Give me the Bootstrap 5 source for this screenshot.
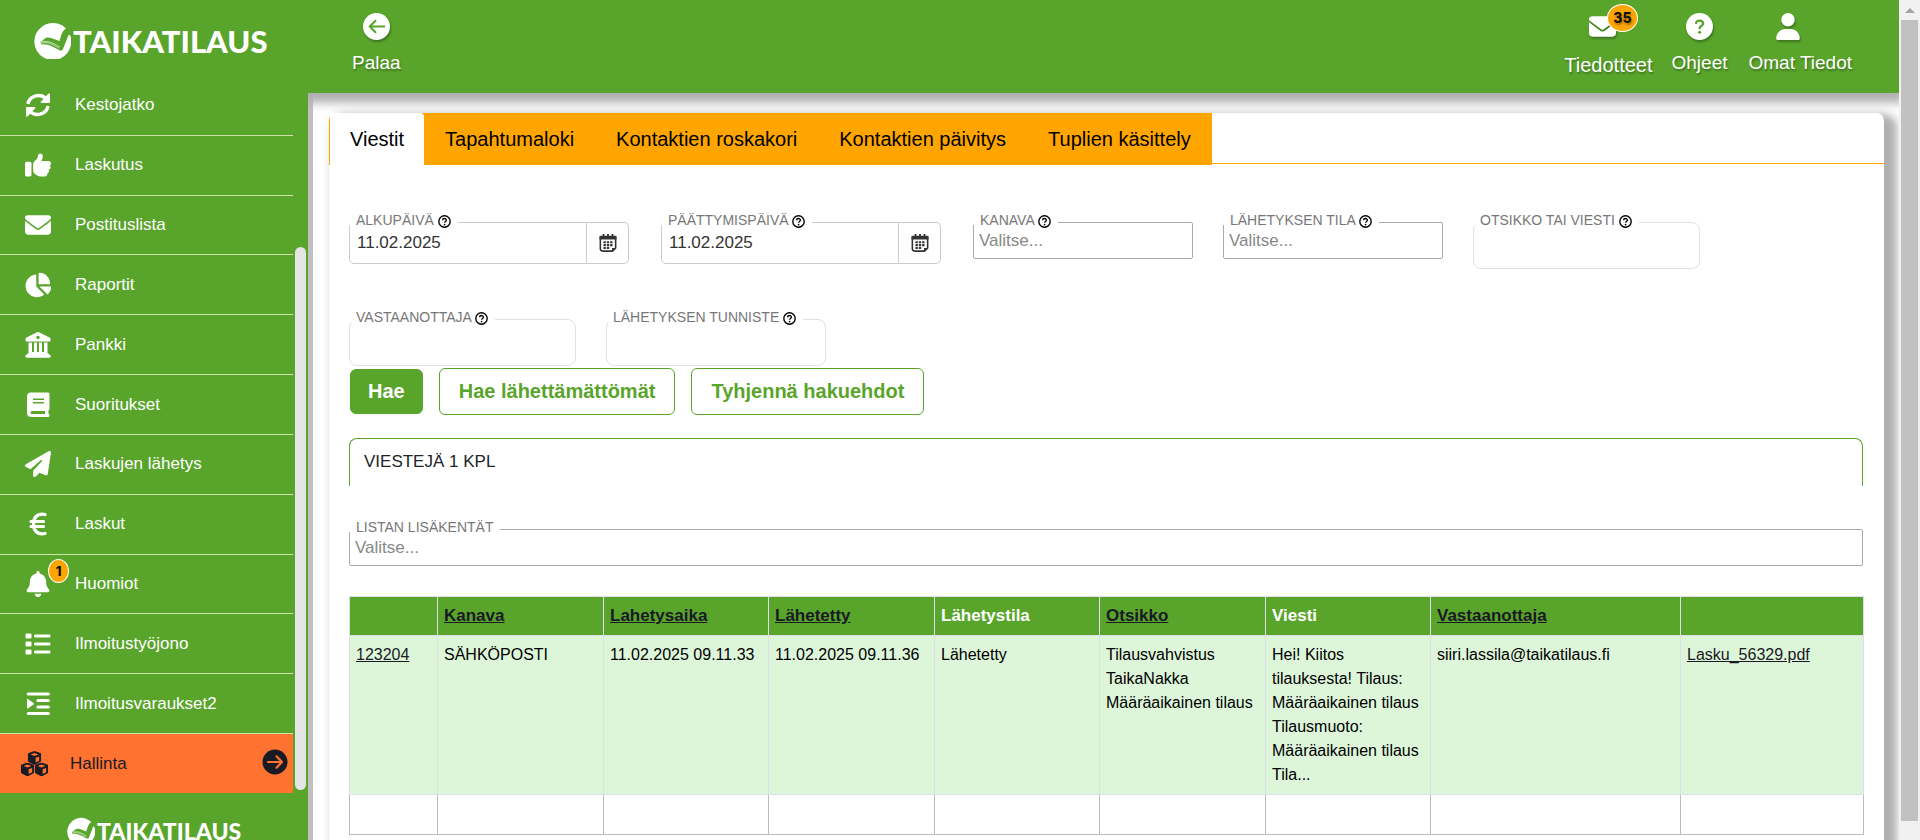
<!DOCTYPE html>
<html lang="fi">
<head>
<meta charset="utf-8">
<meta name="viewport" content="width=device-width, initial-scale=1">
<title>Taikatilaus – Viestit</title>
<link href="https://cdn.jsdelivr.net/npm/bootstrap@5.3.0/dist/css/bootstrap.min.css" rel="stylesheet">
<style>
  :root { --tt-green: #59a52c; --tt-orange: #ffa500; --tt-ink: #1a1a24; }
  body { font-family: "Liberation Sans", Arial, sans-serif; font-size: 17px; line-height: 24px; color: #212529; background: #fff; }
  a { color: inherit; }

  /* sidebar */
  .side { width: 308px; background: var(--tt-green); color: #fff; z-index: 3; }
  .side-top { height: 76px; padding: 22px 0 0 34px; }
  .side-foot { height: 47px; padding: 24px 0 0 67px; overflow: hidden; }
  .brand { font-family: Lato, "Liberation Sans", sans-serif; font-weight: 900; color: #fff; gap: 2px; }
  .brand-lg { font-size: 31px; line-height: 36px; }
  .brand-lg svg { width: 37px; height: 37px; }
  .brand-sm { font-size: 23px; line-height: 28px; }
  .brand-sm svg { width: 28px; height: 28px; }
  .side-list { width: 293px; }
  .side-item { flex: 1 1 0; border-bottom: 1px solid #cfe5a8; }
  .side-item:last-child { border-bottom: 0; }
  .side-link { padding-left: 25px; gap: 24px; }
  .side-link .ico { width: 26px; height: 26px; }
  .side-link.current { background: #ff7230; color: var(--tt-ink); padding: 0 5px 0 20px; gap: 21px; }
  .side-link.current .ico-wide { width: 29px; }
  .side-thumb { left: 295px; top: 247px; bottom: 50px; width: 11px; border-radius: 6px; background: #e5e5e5; }
  .count { background: var(--tt-orange); color: #111; border: 1px solid #fff; border-radius: 50%; font-family: Inter, sans-serif; font-weight: 800; text-align: center; }
  .count-sm { left: 23px; top: -12px; width: 21px; height: 24px; font-size: 13px; line-height: 22px; }
  .count-lg { left: 18px; top: -9px; width: 31px; height: 28px; font-size: 14px; line-height: 26px; }

  /* top bar */
  .topbar { height: 93px; background: var(--tt-green); color: #fff; padding: 13px 47px 0 44px; box-shadow: 0 5px 9px 5px #b0b0b0; z-index: 2; }
  .top-link { font-size: 19px; gap: 11px; text-shadow: 1px 2px 2px rgba(0,0,0,.3); }
  .top-link svg { height: 27px; filter: drop-shadow(1px 2px 1px rgba(0,0,0,.3)); }
  .top-link.news { font-size: 20px; gap: 13px; margin-right: 19px; }
  .top-link.guide { margin-right: 21px; }

  /* content */
  .stage { border-left: 5px solid #c0c0c0; padding: 20px 15px 0 16px; }
  .panel { border-radius: 8px 8px 0 0; background: #fff; box-shadow: 8px 6px 8px 5px #b0b0b0; }
  .tabs { height: 51px; border-bottom: 1px solid var(--tt-orange); }
  .tab-strip { height: 52px; background: var(--tt-orange); border-left: 1px solid var(--tt-orange); border-top-left-radius: 8px; }
  .tab { padding: 0 21px; font-size: 20px; line-height: 52px; color: #000; }
  .tab.on { background: #fff; border-radius: 4px 4px 0 0; padding: 0 20px; }
  .inner { padding: 58px 21px 0 20px; }

  .filters { gap: 50px 30px; }
  .field { position: relative; }
  .field > label { position: absolute; left: -1px; top: -13px; height: 16px; padding: 0 7px 0 8px; background: #fff; color: #777; font-size: 14px; line-height: 23px; text-transform: uppercase; white-space: nowrap; z-index: 4; }
  .field > label svg { width: 13px; height: 13px; position: relative; top: 0; overflow: visible; }
  .field .box { width: 100%; border: 1px solid #dee2e6; border-radius: 8px; background: #fff; padding: 0 8px; font-size: 17px; color: #333; }
  .box.h-text { height: 47px; }
  .box.h-date { height: 42px; }
  .field .box.h-pick { height: 37px; border: 1px solid #aaa; border-radius: 2px; padding: 0 0 0 5px; color: #888; appearance: none; }
  .field .box.h-date { border-color: #ccc; border-radius: 5px 0 0 5px; padding: 0 7px; }
  .f-date { width: 280px; margin-right: 2px; }
  .f-pick { width: 220px; }
  .f-text { width: 227px; }
  .cal { width: 42px; border: 1px solid #ccc; border-left: 0; border-radius: 0 5px 5px 0; background: #fff; flex: none; }
  .acts { gap: 16px; margin-top: 2px; }
  .act { font-size: 20px; font-weight: 700; line-height: 23px; padding: 11px 19px; border-radius: 6px; color: var(--tt-green); border: 1px solid var(--tt-green); background: #fff; }
  .act.main-act { background: var(--tt-green); color: #fff; padding: 10px 17px; margin: 1px 0 1px 1px; }
  .tally { margin-top: 23px; height: 48px; padding: 11px 14px; border: 1px solid var(--tt-green); border-bottom: 0; border-radius: 8px 8px 0 0; }
  .extra { margin-top: 43px; }

  .grid { margin-top: 30px; table-layout: fixed; width: 100%; border-collapse: collapse; color: #000; font-size: 16px; }
  .grid th, .grid td { border: 1px solid #dcdfe8; padding: 7px 6px; vertical-align: top; }
  .grid th { background: var(--tt-green); color: #fff; font-size: 17px; height: 38px; }
  .grid th a, .grid td a { color: var(--tt-ink); }
  .grid .hit td { background: #ddf6da; height: 159px; }
  .grid .blank td { height: 40px; border-color: #bbb; border-top-color: #dce6ef; }

  /* window scroll bar */
  .winbar { width: 21px; background: #f1f1f1; padding: 0 2px 19px 2px; z-index: 3; }
  .winbar svg { width: 17px; height: 20px; }
  .winbar div { background: #c1c1c1; }
</style>
</head>
<body>
<svg class="d-none" aria-hidden="true">
  <symbol id="logo" viewBox="0 0 37 37">
    <path fill="#fff" d="M32 6.500A18.500 18.500 0 1 0 36.500 14C35 11.500 34.500 12.500 33 17L29 27Q28 29.500 25 28C18 24 13 21.500 7 22.500L6.500 19.500C8 20 9 17 13 15.500C18 15 21 18 25.500 19C27 14 28 9 32 6.500Z"/>
    <path fill="none" stroke="#fff" stroke-width=".6" d="M7 20c7-2 12 1 19 5M7 21.200c7-2 12 1 18 5"/>
  </symbol>
  <symbol id="help" viewBox="0 0 16 16">
    <circle cx="8" cy="8" r="7" fill="none" stroke="#000" stroke-width="1.700"/>
    <path d="M5.700 6.600c0-3.100 4.700-2.900 4.600-.2 0 1.500-2.200 1.500-2.200 3.100" fill="none" stroke="#000" stroke-width="1.600"/><circle cx="8.100" cy="11.800" r="1.100"/>
  </symbol>
  <symbol id="calendar" viewBox="0 0 20 20">
    <path fill="none" stroke="#333" stroke-width="1.800" d="M1.500 4v12.500q0 2.500 2.500 2.500H15l3.500-3.500V4z"/><path fill="#333" d="M.600 3q0-1 1-1H4V0h2v2h3V0h2v2h3V0h2v2h2.400q1 0 1 1v3H.6zM5 8h2.600v2.400H5zM8.700 8h2.600v2.400H8.700zM12.400 8H15v2.400h-2.600zM5 11.200h2.600v2.300H5zM8.700 11.200h2.600v2.300H8.700zM12.400 11.200H15v2.300h-2.600zM5 14.400h2.600v2.300H5zM8.700 14.400h2.600v2.300H8.700zM14.500 19.500v-4h4.500z"/>
  </symbol>
  <symbol id="envelope" viewBox="0 0 512 512"><path d="M48 64C21.500 64 0 85.500 0 112c0 15.100 7.100 29.300 19.200 38.400L236.800 313.600c11.400 8.500 27 8.500 38.400 0L492.800 150.400c12.100-9.100 19.200-23.300 19.200-38.400c0-26.500-21.500-48-48-48H48zM0 176V384c0 35.300 28.700 64 64 64H448c35.300 0 64-28.700 64-64V176L294.400 339.200c-22.800 17.100-54 17.100-76.800 0L0 176z"/></symbol>
  <symbol id="cube" viewBox="0 0 16 16"><path fill-rule="evenodd" d="M7 .3Q8 0 9 .3l5.500 2q1 .4 1 1.500v7.400q0 1-1 1.500L9 15.500Q8 16 7 15.500L1.500 12.700q-1-.5-1-1.500V3.800q0-1.100 1-1.500zM8 2.300 3.500 4 8 5.800 12.500 4zM9.300 7.800v5.200l4-2V6.200z"/></symbol>
</svg>

<div class="d-flex vh-100 overflow-hidden">
  <aside class="side position-relative d-flex flex-column flex-shrink-0">
    <div class="side-top flex-shrink-0"><a href="#" class="brand brand-lg d-flex align-items-center text-decoration-none"><svg aria-hidden="true"><use href="#logo"/></svg><span>TAIKATILAUS</span></a></div>
    <ul class="side-list list-unstyled d-flex flex-column flex-fill mb-0">
      <li class="side-item d-flex"><a href="#" class="side-link d-flex align-items-center flex-fill text-decoration-none">
        <svg class="ico" viewBox="0 0 26 26" fill="none" stroke="#fff" stroke-width="3.400"><path d="M3 12A10.500 9.500 0 0 1 21 6.500M23 14A10.500 9.500 0 0 1 5 19.500"/><path fill="#fff" stroke="none" d="M23.500 1.500q1.500-.5 1.500 1V10q0 1-1 1h-7.500q-1.500-.3-.5-1.500zM2.500 24.500q-1.500.5-1.500-1V16q0-1 1-1h7.500q1.500.3.500 1.500z"/></svg>Kestojatko</a></li>
      <li class="side-item d-flex"><a href="#" class="side-link d-flex align-items-center flex-fill text-decoration-none">
        <svg class="ico" viewBox="0 0 512 512" fill="#fff"><path d="M313.400 32.900c26 5.200 42.900 30.500 37.700 56.500l-2.300 11.400c-5.300 26.700-15.100 52.100-28.800 75.200H464c26.500 0 48 21.500 48 48c0 18.500-10.500 34.600-25.900 42.600C497 275.400 504 288.900 504 304c0 23.400-16.800 42.900-38.900 47.100c4.400 7.300 6.900 15.800 6.900 24.900c0 21.300-13.900 39.400-33.100 45.600c.7 3.300 1.100 6.800 1.100 10.400c0 26.500-21.500 48-48 48H294.500c-19 0-37.500-5.600-53.300-16.100l-38.500-25.700C176 420.400 160 390.400 160 358.300V247.100c0-29.200 13.300-56.700 36-75l7.400-5.900c26.500-21.200 44.600-51 51.200-84.200l2.300-11.400c5.200-26 30.500-42.900 56.500-37.700zM32 192H96c17.700 0 32 14.300 32 32V448c0 17.700-14.300 32-32 32H32c-17.700 0-32-14.300-32-32V224c0-17.700 14.300-32 32-32z"/></svg>Laskutus</a></li>
      <li class="side-item d-flex"><a href="#" class="side-link d-flex align-items-center flex-fill text-decoration-none">
        <svg class="ico" fill="#fff"><use href="#envelope"/></svg>Postituslista</a></li>
      <li class="side-item d-flex"><a href="#" class="side-link d-flex align-items-center flex-fill text-decoration-none">
        <svg class="ico" viewBox="20 0 544 512" fill="#fff"><path d="M304 240V16.600c0-9 7-16.600 16-16.600C443.700 0 544 100.300 544 224c0 9-7.600 16-16.600 16H304zM32 272C32 150.700 122.100 50.300 239 34.300c9.200-1.300 17 6.100 17 15.400V288L412.500 444.500c6.700 6.700 6.200 17.700-1.500 23.100C371.800 495.600 323.800 512 272 512C139.500 512 32 404.600 32 272zm526.400 16c9.300 0 16.600 7.800 15.400 17c-7.700 55.900-34.600 105.600-73.900 142.300c-6 5.600-15.400 5.200-21.200-.7L320 288H558.400z"/></svg>Raportit</a></li>
      <li class="side-item d-flex"><a href="#" class="side-link d-flex align-items-center flex-fill text-decoration-none">
        <svg class="ico" viewBox="0 0 26 26" fill="#fff"><path fill-rule="evenodd" d="M12 .3q1-.4 2 0l10.500 5.200q1 .6 1 1.500v1.500q0 1-1 1h-23q-1 0-1-1V7q0-.9 1-1.500zM13 3.700a1.700 1.700 0 1 0 .01 0z"/><path d="M3.500 10.500H7V20h2v-9.500h3V20h2v-9.500h3V20h2v-9.500h3.500V21l2.500 2q.7.500.7 1.300 0 1.400-1.300 1.400H1.600Q.3 25.700.3 24.300.3 23.500 1 23l2.500-2z"/></svg>Pankki</a></li>
      <li class="side-item d-flex"><a href="#" class="side-link d-flex align-items-center flex-fill text-decoration-none">
        <svg class="ico" viewBox="0 0 26 26" fill="#fff"><path fill-rule="evenodd" d="M6 .5h17q1.500 0 1.500 1.500v15q0 1.300-1 1.600V22q1 .2 1 1.500 0 1.500-1.500 1.500H6.500Q2 25 2 21V4.500Q2 .5 6 .5zM8 6.500V8h11V6.500zm0 3.500v1.500h11V10zM7 19Q5.500 19 5.500 20.500T7 22h13v-3z"/></svg>Suoritukset</a></li>
      <li class="side-item d-flex"><a href="#" class="side-link d-flex align-items-center flex-fill text-decoration-none">
        <svg class="ico" viewBox="0 0 512 512" fill="#fff"><path d="M498.100 5.600c10.100 7 15.400 19.100 13.500 31.200l-64 416c-1.500 9.700-7.400 18.200-16 23s-18.900 5.400-28 1.600L284 427.700l-68.500 74.100c-8.900 9.700-22.900 12.900-35.200 8.100S160 493.200 160 480V396.400c0-4 1.500-7.800 4.200-10.700L331.800 202.800c5.800-6.300 5.600-16-.4-22s-15.700-6.400-22-.7L106 360.800 17.700 316.600C7.100 311.300 .3 300.700 0 288.900s5.900-22.800 16.100-28.700l448-256c10.700-6.100 23.900-5.500 34 1.400z"/></svg>Laskujen lähetys</a></li>
      <li class="side-item d-flex"><a href="#" class="side-link d-flex align-items-center flex-fill text-decoration-none">
        <svg class="ico" viewBox="0 0 26 26" fill="none" stroke="#fff" stroke-width="3.200" stroke-linecap="round"><path d="M20 3.500C12 1.500 8.500 7 8.500 13S12 24.500 20 22.500M6 10.500h12.500M6 15.500h12.500"/></svg>Laskut</a></li>
      <li class="side-item d-flex"><a href="#" class="side-link d-flex align-items-center flex-fill text-decoration-none">
        <span class="position-relative d-flex"><svg class="ico" viewBox="0 0 448 512" fill="#fff"><path d="M224 0c-17.700 0-32 14.300-32 32V51.200C119 66 64 130.600 64 208v18.800c0 47-17.300 92.400-48.500 127.600l-7.400 8.300c-8.400 9.400-10.400 22.900-5.300 34.400S19.400 416 32 416H416c12.600 0 24-7.400 29.200-18.900s3.100-25-5.300-34.400l-7.400-8.300C401.300 319.200 384 273.900 384 226.800V208c0-77.400-55-142-128-156.800V32c0-17.700-14.300-32-32-32zm45.300 493.300c12-12 18.700-28.300 18.700-45.300H160c0 17 6.700 33.300 18.700 45.300s28.300 18.700 45.300 18.700s33.300-6.700 45.300-18.700z"/></svg><span class="count count-sm position-absolute">1</span></span>Huomiot</a></li>
      <li class="side-item d-flex"><a href="#" class="side-link d-flex align-items-center flex-fill text-decoration-none">
        <svg class="ico" viewBox="0 0 26 26" fill="#fff"><path d="M1.500 2.500h4q1 0 1 1v3q0 1-1 1h-4q-1 0-1-1v-3q0-1 1-1zm0 8h4q1 0 1 1v3q0 1-1 1h-4q-1 0-1-1v-3q0-1 1-1zm0 8h4q1 0 1 1v3q0 1-1 1h-4q-1 0-1-1v-3q0-1 1-1z"/><path stroke="#fff" stroke-width="3.200" stroke-linecap="round" d="M10.500 5h13.500M10.500 13h13.500M10.500 21h13.500"/></svg>Ilmoitustyöjono</a></li>
      <li class="side-item d-flex"><a href="#" class="side-link d-flex align-items-center flex-fill text-decoration-none">
        <svg class="ico" viewBox="0 0 26 26" fill="#fff" stroke="#fff" stroke-linecap="round"><path stroke-width="3.200" d="M3.300 3h20M13 9.500h10.300M13 16h10.300M3.300 22.500h20"/><path stroke="none" d="M2 8.500q0-1 1-.6l5.500 4q.7.800 0 1.600l-5.500 4q-1 .4-1-.6z"/></svg>Ilmoitusvaraukset2</a></li>
      <li class="side-item d-flex"><a href="#" class="side-link current d-flex align-items-center flex-fill text-decoration-none">
        <svg class="ico ico-wide" viewBox="0 0 29 26" fill="#1a1a24"><use href="#cube" x="7" y="0" width="15" height="14"/><use href="#cube" x="0" y="11.500" width="15" height="14"/><use href="#cube" x="14" y="11.500" width="15" height="14"/></svg>Hallinta
        <svg class="ico ms-auto mb-1" viewBox="0 0 26 26"><circle cx="13" cy="13" r="12.500" fill="#1a1a24"/><path fill="none" stroke="#ff7230" stroke-width="2.200" stroke-linecap="round" stroke-linejoin="round" d="M6 13h14M14.500 7.300 20 13l-5.500 5.700"/></svg></a></li>
    </ul>
    <div class="side-foot flex-shrink-0"><div class="brand brand-sm d-flex align-items-center"><svg aria-hidden="true"><use href="#logo"/></svg><span>TAIKATILAUS</span></div></div>
    <div class="side-thumb position-absolute"></div>
  </aside>

  <div class="d-flex flex-column flex-fill overflow-hidden">
    <header class="topbar position-relative d-flex align-items-start flex-shrink-0">
      <a href="#" class="top-link d-flex flex-column align-items-center text-decoration-none me-auto">
        <svg viewBox="0 0 26 26" width="27"><circle cx="13" cy="13" r="13" fill="#fff"/><path fill="none" stroke="#59a52c" stroke-width="2" stroke-linecap="round" stroke-linejoin="round" d="M20.500 13h-14M12 7.500 6.500 13l5.500 5.500"/></svg>Palaa</a>
      <a href="#" class="top-link news d-flex flex-column align-items-center text-decoration-none">
        <span class="position-relative d-flex me-2 pe-1"><svg fill="#fff" width="27"><use href="#envelope"/></svg><span class="count count-lg position-absolute">35</span></span>Tiedotteet</a>
      <a href="#" class="top-link guide d-flex flex-column align-items-center text-decoration-none">
        <svg viewBox="0 0 26 26" width="27"><circle cx="13" cy="13" r="13" fill="#fff"/><path fill="none" stroke="#59a52c" stroke-width="2.200" stroke-linecap="round" d="M9.800 9.800C9.900 6.300 16.500 6.500 16.500 10.200 16.500 12.500 13.100 12.500 13.100 14.800"/><circle cx="13.100" cy="18.500" r="1.500" fill="#59a52c"/></svg>Ohjeet</a>
      <a href="#" class="top-link d-flex flex-column align-items-center text-decoration-none">
        <svg viewBox="0 0 448 512" width="24" fill="#fff" class="me-4"><path d="M224 256A128 128 0 1 0 224 0a128 128 0 1 0 0 256zm-45.700 48C79.800 304 0 383.800 0 482.300C0 498.700 13.300 512 29.700 512H418.300c16.400 0 29.700-13.300 29.700-29.700C448 383.800 368.200 304 269.700 304H178.300z"/></svg>Omat Tiedot</a>
    </header>

    <main class="stage d-flex flex-column flex-fill overflow-hidden">
      <div class="panel flex-fill">
        <nav class="tabs d-flex align-items-start">
          <div class="tab-strip d-flex">
            <a href="#" class="tab on text-decoration-none">Viestit</a>
            <a href="#" class="tab text-decoration-none">Tapahtumaloki</a>
            <a href="#" class="tab text-decoration-none">Kontaktien roskakori</a>
            <a href="#" class="tab text-decoration-none">Kontaktien päivitys</a>
            <a href="#" class="tab text-decoration-none">Tuplien käsittely</a>
          </div>
        </nav>
        <div class="inner">
          <form onsubmit="return false">
            <div class="filters d-flex flex-wrap align-items-start">
              <div class="field f-date d-flex">
                <label for="start">Alkupäivä <svg><use href="#help"/></svg></label>
                <input id="start" type="text" class="box h-date" value="11.02.2025">
                <button type="button" class="cal p-0 d-flex align-items-center justify-content-center" aria-label="Valitse alkupäivä"><svg width="18" height="20"><use href="#calendar"/></svg></button>
              </div>
              <div class="field f-date d-flex">
                <label for="end">Päättymispäivä <svg><use href="#help"/></svg></label>
                <input id="end" type="text" class="box h-date" value="11.02.2025">
                <button type="button" class="cal p-0 d-flex align-items-center justify-content-center" aria-label="Valitse päättymispäivä"><svg width="18" height="20"><use href="#calendar"/></svg></button>
              </div>
              <div class="field f-pick d-flex">
                <label for="channel">Kanava <svg><use href="#help"/></svg></label>
                <select id="channel" class="box h-pick"><option>Valitse...</option></select>
              </div>
              <div class="field f-pick d-flex">
                <label for="state">Lähetyksen tila <svg><use href="#help"/></svg></label>
                <select id="state" class="box h-pick"><option>Valitse...</option></select>
              </div>
              <div class="field f-text d-flex">
                <label for="subject">Otsikko tai viesti <svg><use href="#help"/></svg></label>
                <input id="subject" type="text" class="box h-text">
              </div>
              <div class="field f-text d-flex">
                <label for="recipient">Vastaanottaja <svg><use href="#help"/></svg></label>
                <input id="recipient" type="text" class="box h-text">
              </div>
              <div class="field f-pick d-flex">
                <label for="sendid">Lähetyksen tunniste <svg><use href="#help"/></svg></label>
                <input id="sendid" type="text" class="box h-text">
              </div>
            </div>
            <div class="acts d-flex">
              <button type="submit" class="act main-act">Hae</button>
              <button type="button" class="act">Hae lähettämättömät</button>
              <button type="button" class="act">Tyhjennä hakuehdot</button>
            </div>
          </form>

          <div class="tally">VIESTEJÄ 1 KPL</div>

          <div class="field extra d-flex">
            <label for="extra">Listan lisäkentät</label>
            <select id="extra" class="box h-pick"><option>Valitse...</option></select>
          </div>

          <table class="grid">
            <colgroup><col style="width:88px"><col style="width:166px"><col style="width:165px"><col style="width:166px"><col style="width:165px"><col style="width:166px"><col style="width:165px"><col style="width:250px"><col style="width:183px"></colgroup>
            <thead>
              <tr><th></th><th><a href="#">Kanava</a></th><th><a href="#">Lahetysaika</a></th><th><a href="#">Lähetetty</a></th><th>Lähetystila</th><th><a href="#">Otsikko</a></th><th>Viesti</th><th><a href="#">Vastaanottaja</a></th><th></th></tr>
            </thead>
            <tbody>
              <tr class="hit"><td><a href="#">123204</a></td><td>SÄHKÖPOSTI</td><td>11.02.2025 09.11.33</td><td>11.02.2025 09.11.36</td><td>Lähetetty</td><td>Tilausvahvistus TaikaNakka Määräaikainen tilaus</td><td>Hei! Kiitos tilauksesta! Tilaus: Määräaikainen tilaus Tilausmuoto: Määräaikainen tilaus Tila...</td><td>siiri.lassila@taikatilaus.fi</td><td><a href="#">Lasku_56329.pdf</a></td></tr>
              <tr class="blank"><td></td><td></td><td></td><td></td><td></td><td></td><td></td><td></td><td></td></tr>
            </tbody>
          </table>
        </div>
      </div>
    </main>
  </div>

  <div class="winbar d-flex flex-column flex-shrink-0" aria-hidden="true">
    <svg viewBox="0 0 16 20"><path fill="#a3a3a3" d="M3.500 13 8.500 8l5 5z"/></svg>
    <div class="flex-fill"></div>
  </div>
</div>
<script src="https://cdn.jsdelivr.net/npm/bootstrap@5.3.0/dist/js/bootstrap.bundle.min.js"></script>
</body>
</html>
